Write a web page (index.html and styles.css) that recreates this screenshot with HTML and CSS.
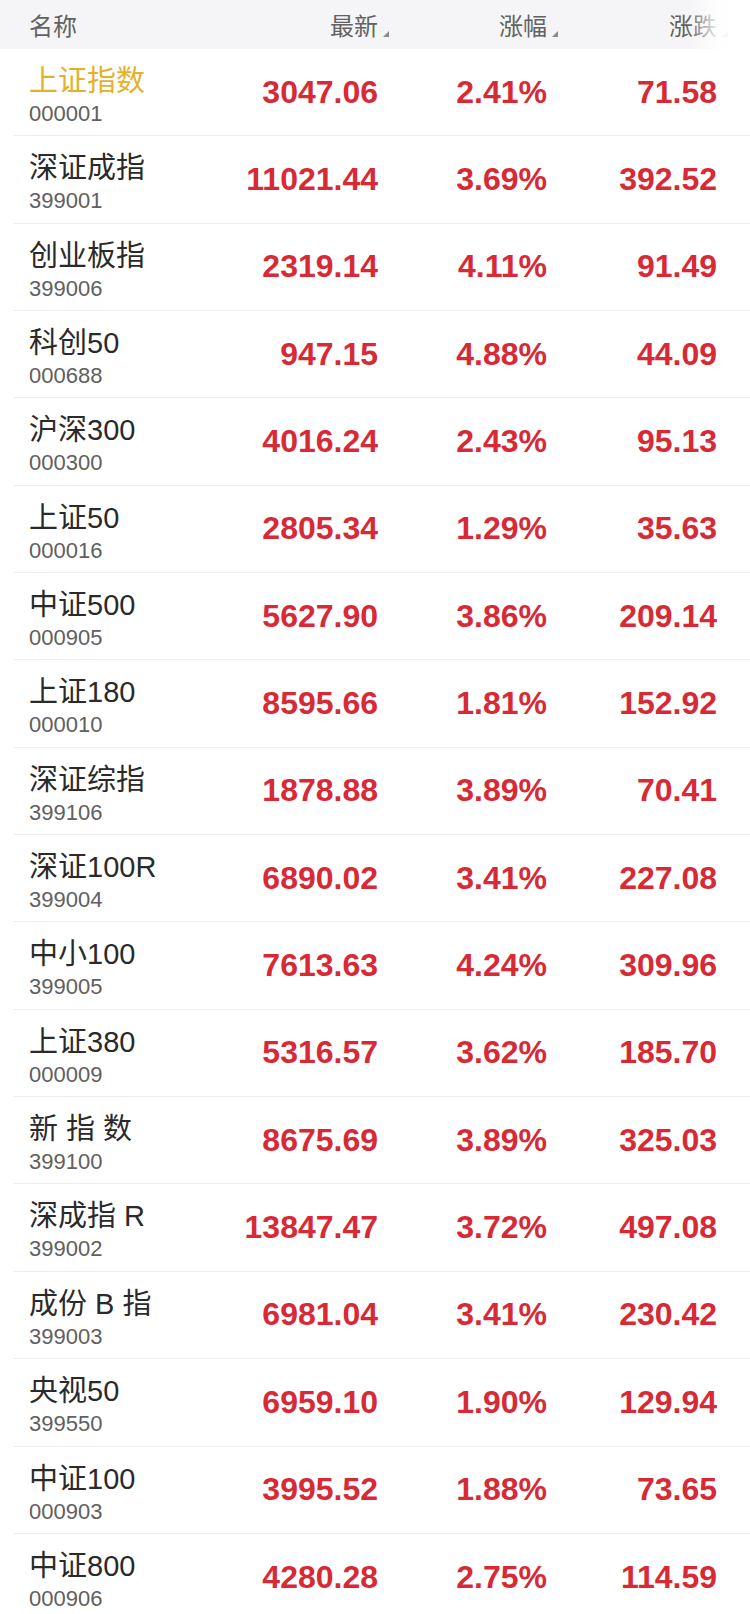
FILE: index.html
```html
<!DOCTYPE html>
<html lang="zh-CN">
<head>
  <meta charset="UTF-8">
  <meta name="viewport" content="width=device-width, initial-scale=1.0">
  <title>指数行情</title>
  <link rel="stylesheet" href="styles.css">
</head>
<body>
  <main class="market">
    <div class="market__head">
      <span class="market__col">名称</span>
      <span class="market__col market__col--sort">最新</span>
      <span class="market__col market__col--sort">涨幅</span>
      <span class="market__col market__col--sort">涨跌</span>
      <div class="market__fade"></div>
    </div>

    <div class="quote">
      <div class="quote__name"><span class="quote__title quote__title--main">上证指数</span><span class="quote__code">000001</span></div>
      <span class="quote__num">3047.06</span><span class="quote__num">2.41%</span><span class="quote__num">71.58</span>
    </div>
    <div class="quote">
      <div class="quote__name"><span class="quote__title">深证成指</span><span class="quote__code">399001</span></div>
      <span class="quote__num">11021.44</span><span class="quote__num">3.69%</span><span class="quote__num">392.52</span>
    </div>
    <div class="quote">
      <div class="quote__name"><span class="quote__title">创业板指</span><span class="quote__code">399006</span></div>
      <span class="quote__num">2319.14</span><span class="quote__num">4.11%</span><span class="quote__num">91.49</span>
    </div>
    <div class="quote">
      <div class="quote__name"><span class="quote__title">科创50</span><span class="quote__code">000688</span></div>
      <span class="quote__num">947.15</span><span class="quote__num">4.88%</span><span class="quote__num">44.09</span>
    </div>
    <div class="quote">
      <div class="quote__name"><span class="quote__title">沪深300</span><span class="quote__code">000300</span></div>
      <span class="quote__num">4016.24</span><span class="quote__num">2.43%</span><span class="quote__num">95.13</span>
    </div>
    <div class="quote">
      <div class="quote__name"><span class="quote__title">上证50</span><span class="quote__code">000016</span></div>
      <span class="quote__num">2805.34</span><span class="quote__num">1.29%</span><span class="quote__num">35.63</span>
    </div>
    <div class="quote">
      <div class="quote__name"><span class="quote__title">中证500</span><span class="quote__code">000905</span></div>
      <span class="quote__num">5627.90</span><span class="quote__num">3.86%</span><span class="quote__num">209.14</span>
    </div>
    <div class="quote">
      <div class="quote__name"><span class="quote__title">上证180</span><span class="quote__code">000010</span></div>
      <span class="quote__num">8595.66</span><span class="quote__num">1.81%</span><span class="quote__num">152.92</span>
    </div>
    <div class="quote">
      <div class="quote__name"><span class="quote__title">深证综指</span><span class="quote__code">399106</span></div>
      <span class="quote__num">1878.88</span><span class="quote__num">3.89%</span><span class="quote__num">70.41</span>
    </div>
    <div class="quote">
      <div class="quote__name"><span class="quote__title">深证100R</span><span class="quote__code">399004</span></div>
      <span class="quote__num">6890.02</span><span class="quote__num">3.41%</span><span class="quote__num">227.08</span>
    </div>
    <div class="quote">
      <div class="quote__name"><span class="quote__title">中小100</span><span class="quote__code">399005</span></div>
      <span class="quote__num">7613.63</span><span class="quote__num">4.24%</span><span class="quote__num">309.96</span>
    </div>
    <div class="quote">
      <div class="quote__name"><span class="quote__title">上证380</span><span class="quote__code">000009</span></div>
      <span class="quote__num">5316.57</span><span class="quote__num">3.62%</span><span class="quote__num">185.70</span>
    </div>
    <div class="quote">
      <div class="quote__name"><span class="quote__title">新 指 数</span><span class="quote__code">399100</span></div>
      <span class="quote__num">8675.69</span><span class="quote__num">3.89%</span><span class="quote__num">325.03</span>
    </div>
    <div class="quote">
      <div class="quote__name"><span class="quote__title">深成指 R</span><span class="quote__code">399002</span></div>
      <span class="quote__num">13847.47</span><span class="quote__num">3.72%</span><span class="quote__num">497.08</span>
    </div>
    <div class="quote">
      <div class="quote__name"><span class="quote__title">成份 B 指</span><span class="quote__code">399003</span></div>
      <span class="quote__num">6981.04</span><span class="quote__num">3.41%</span><span class="quote__num">230.42</span>
    </div>
    <div class="quote">
      <div class="quote__name"><span class="quote__title">央视50</span><span class="quote__code">399550</span></div>
      <span class="quote__num">6959.10</span><span class="quote__num">1.90%</span><span class="quote__num">129.94</span>
    </div>
    <div class="quote">
      <div class="quote__name"><span class="quote__title">中证100</span><span class="quote__code">000903</span></div>
      <span class="quote__num">3995.52</span><span class="quote__num">1.88%</span><span class="quote__num">73.65</span>
    </div>
    <div class="quote">
      <div class="quote__name"><span class="quote__title">中证800</span><span class="quote__code">000906</span></div>
      <span class="quote__num">4280.28</span><span class="quote__num">2.75%</span><span class="quote__num">114.59</span>
    </div>
  </main>
</body>
</html>
```

FILE: styles.css
```css
*,
*::before,
*::after {
  box-sizing: border-box;
}
body{
  margin: 0;
  padding: 0;
  background-color: #fff;
  font-family: 'Liberation Sans', 'Noto Sans CJK SC', sans-serif;
  overflow: hidden;
}
.market{
  width: 750px;
}
.market__head{
  position: relative;
  display: grid;
  grid-template-columns: 1fr 180px 169px 170px;
  align-items: center;
  height: 49px;
  padding: 0 33px 0 29px;
  background-color: #f5f5f7;
}
.market__col{
  font-family: 'Noto Sans CJK SC', sans-serif;
  font-size: 24px;
  line-height: 30px;
  color: #626262;
}
.market__col--sort{
  position: relative;
  justify-self: end;
}
.market__col--sort::after{
  content: '';
  position: absolute;
  right: -11px;
  bottom: 3px;
  width: 0;
  height: 0;
  border-left: 6px solid transparent;
  border-bottom: 6px solid #8a8a8a;
}
.market__fade{
  position: absolute;
  top: 0;
  right: 0;
  width: 62px;
  height: 100%;
  background: linear-gradient(to right, rgba(255,255,255,0), rgba(255,255,255,0.85) 45%, #fff 75%);
}
.quote{
  display: grid;
  grid-template-columns: 1fr 180px 169px 170px;
  align-items: center;
  height: 87.35px;
  margin-left: 14px;
  padding: 0 33px 0 15px;
  border-bottom: 1px solid #ededed;
}
.quote__name{
  align-self: start;
  display: flex;
  flex-direction: column;
  padding-top: 15px;
  white-space: nowrap;
}
.quote__title{
  font-size: 29px;
  line-height: 34px;
  color: #2a2a2a;
}
.quote__title--main{
  color: #e3b12a;
}
.quote__code{
  margin-top: 3px;
  font-size: 22px;
  line-height: 26px;
  color: #606060;
}
.quote__num{
  justify-self: end;
  font-size: 32px;
  font-weight: bold;
  color: #d72a36;
}
```
